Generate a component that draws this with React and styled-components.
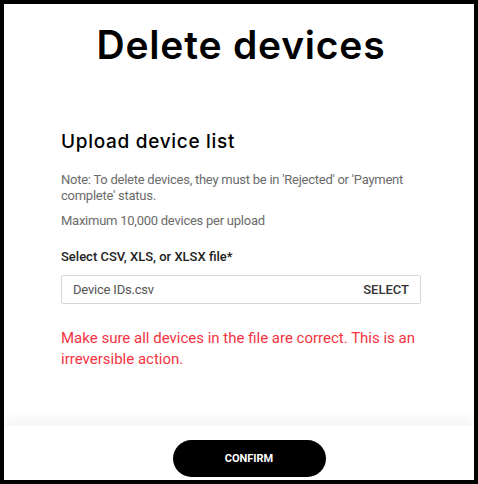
import styled, { createGlobalStyle } from "styled-components";

const GlobalStyle = createGlobalStyle`
  html, body {
    margin: 0;
    padding: 0;
    background: #000000;
  }
  * {
    box-sizing: border-box;
  }
`;

const Frame = styled.div`
  display: flex;
  flex-direction: column;
  width: 478px;
  height: 484px;
  border: 4px solid #000000;
  background: #ffffff;
  overflow: hidden;
`;

const Body = styled.div`
  display: flex;
  flex: 1;
  padding: 18px 53px 0 57px;
  flex-direction: column;
  align-items: flex-start;
`;

const Title = styled.h1`
  align-self: stretch;
  margin: 0;

  color: #000000;
  text-align: center;
  font-family: Inter, sans-serif;
  font-size: 39px;
  font-weight: 600;
  line-height: 46px;
  letter-spacing: 0.8px;
`;

const SubTitle = styled.h2`
  margin: 62px 0 0;

  color: #000000;
  font-family: Inter, sans-serif;
  font-size: 19px;
  font-weight: 500;
  line-height: 24px;
  letter-spacing: 0.7px;
`;

const Note = styled.p`
  margin: ${(props) => props.$top}px 0 0;

  color: #6b6b6b;
  font-family: Roboto, sans-serif;
  font-size: 13px;
  line-height: 16px;
  letter-spacing: -0.25px;
`;

const Label = styled.div`
  margin-top: 20px;

  color: #222222;
  font-family: Roboto, sans-serif;
  font-size: 13px;
  font-weight: 500;
  line-height: 16px;
`;

const FileInput = styled.div`
  display: flex;
  margin-top: 10px;
  padding: 0 11px 0 11px;
  height: 29px;
  justify-content: space-between;
  align-items: center;
  align-self: stretch;

  border: 1px solid #d6d6d6;
  border-radius: 2px;

  font-family: Roboto, sans-serif;
  font-size: 13px;
`;

const FileName = styled.span`
  color: #555555;
  letter-spacing: -0.2px;
`;

const SelectBtn = styled.span`
  cursor: pointer;
  color: #333333;
  font-weight: 500;
`;

const Warning = styled.p`
  margin: 24px 0 0;

  color: #f4333f;
  font-family: Roboto, sans-serif;
  font-size: 15px;
  line-height: 21px;
`;

const Footer = styled.div`
  display: flex;
  height: 54px;
  padding: 14px 0 0 20px;
  justify-content: center;
  align-items: flex-start;

  background: #ffffff;
  box-shadow: 0 -6px 12px rgba(0, 0, 0, 0.05);
`;

const ConfirmBtn = styled.button`
  cursor: pointer;
  width: 153px;
  height: 37px;

  border: none;
  border-radius: 100px;
  background: #000000;

  color: #ffffff;
  font-family: Roboto, sans-serif;
  font-size: 11px;
  font-weight: 700;
`;

const App = () => {
  return (
    <>
      <GlobalStyle />
      <Frame>
        <Body>
          <Title>Delete devices</Title>
          <SubTitle>Upload device list</SubTitle>
          <Note $top={18}>
            Note: To delete devices, they must be in 'Rejected' or 'Payment
            complete' status.
          </Note>
          <Note $top={9}>Maximum 10,000 devices per upload</Note>
          <Label>Select CSV, XLS, or XLSX file*</Label>
          <FileInput>
            <FileName>Device IDs.csv</FileName>
            <SelectBtn>SELECT</SelectBtn>
          </FileInput>
          <Warning>
            Make sure all devices in the file are correct. This is an
            irreversible action.
          </Warning>
        </Body>
        <Footer>
          <ConfirmBtn>CONFIRM</ConfirmBtn>
        </Footer>
      </Frame>
    </>
  );
};

export default App;
